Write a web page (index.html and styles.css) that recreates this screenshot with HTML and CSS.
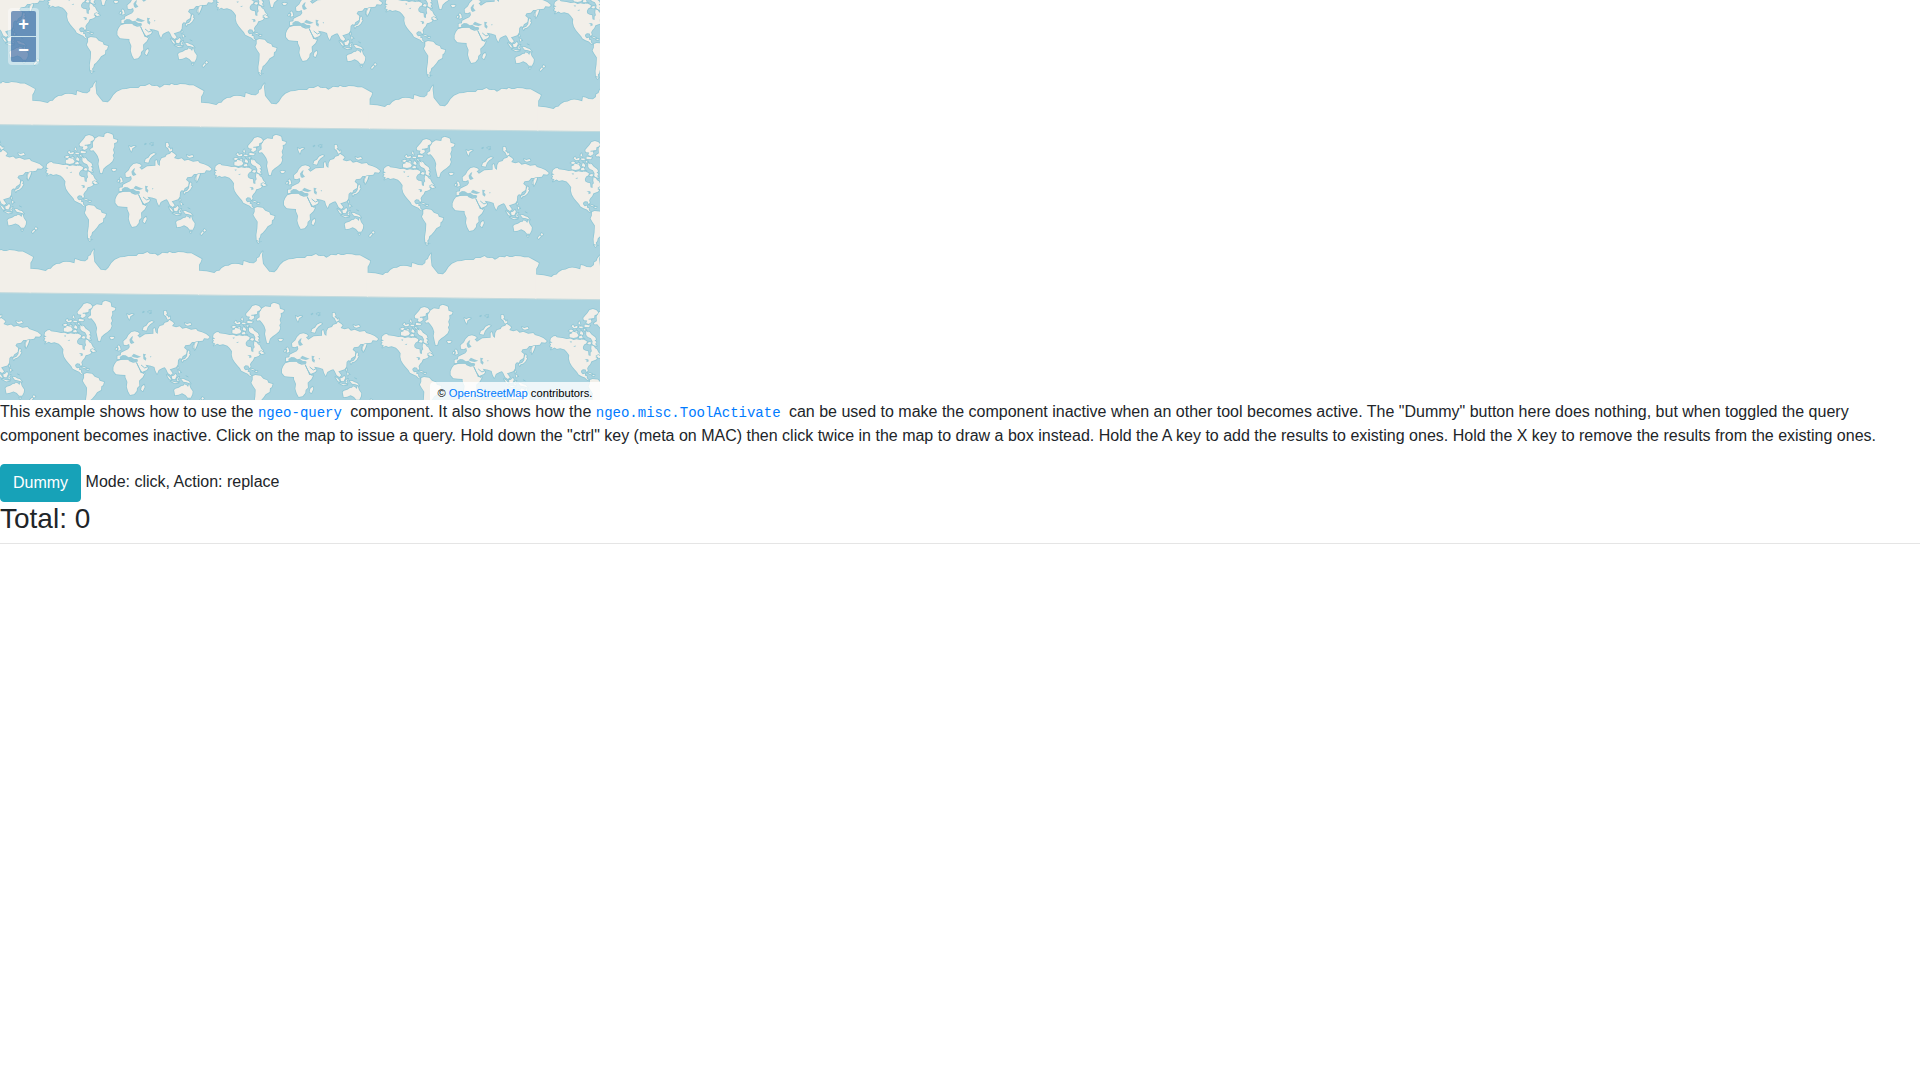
FILE: index.html
```html
<!DOCTYPE html>
<html lang="en">
<head>
<meta charset="utf-8">
<title>Query example</title>
<link rel="stylesheet" href="styles.css">
</head>
<body>
<div class="map">
<svg class="tiles" width="600" height="400" viewBox="0 0 600 400">
<defs>
<g id="world" transform="translate(180 120) scale(.3333)">
<path class="coast" d="M57 452L80 454 103 459 110 453 118 452 125 444 135 438 145 437 155 432 165 431 176 432 189 436 191 423 199 425 209 429 221 430 230 423 231 415 238 411 241 403 248 394 246 405 249 431 256 440 268 455 283 457 291 449 300 435 310 425 326 418 338 417 350 414 375 414 381 408 395 408 408 402 415 407 422 408 431 407 439 413 447 409 453 404 469 406 474 401 483 405 491 405 500 402 516 403 527 406 540 406 555 414 571 423 568 432 563 440 563 457"/>
<path class="ice" d="M55 452L80 454 103 459 110 453 118 452 125 444 135 438 145 437 155 432 165 431 176 432 189 436 191 423 199 425 209 429 221 430 230 423 231 415 238 411 241 403 248 394 246 405 249 431 256 440 268 455 283 457 291 449 300 435 310 425 326 418 338 417 350 414 375 414 381 408 395 408 408 402 415 407 422 408 431 407 439 413 447 409 453 404 469 406 474 401 483 405 491 405 500 402 516 403 527 406 540 406 555 414 571 423 568 432 563 440 563 457 575 459 575 531 55 525Z"/>
<path class="edge" d="M57 525L566 531"/>
<g class="land">
<path d="M105 148L107 139 115 133 121 132 125 136 142 138 155 141 166 140 175 144 184 142 195 144 203 141 208 144 215 148 214 154 207 158 203 165 204 172 210 176 219 178 220 190 226 192 226 182 230 178 228 170 229 160 236 163 240 169 245 172 250 182 256 188 250 193 240 195 246 198 243 203 236 206 229 208 225 217 220 222 216 229 218 237 214 240 211 233 203 232 197 237 199 243 203 247 210 245 209 251 215 253 215 259 222 266 215 263 209 257 199 253 190 248 186 241 178 232 170 222 164 212 161 200 162 190 155 180 148 173 135 169 125 171 118 167 107 173 112 167 104 163 108 158 104 153 112 152Z"/>
<path d="M224 264L232 261 248 263 256 272 268 277 271 284 284 288 281 298 276 301 275 312 263 319 257 328 248 338 242 343 240 352 236 356 238 364 230 361 229 345 232 325 233 305 225 293 220 284 224 275Z"/>
<path d="M236 94L245 88 244 74 250 62 262 55 278 57 280 48 288 44 298 47 304 50 306 62 318 66 316 73 308 76 309 85 305 95 308 105 304 112 307 120 303 130 294 138 284 145 276 152 272 166 267 165 264 152 261 138 263 126 259 114 253 105 246 97 238 98Z"/>
<path d="M343 176L342 166 352 157 357 147 366 138 376 136 386 139 391 144 384 148 391 155 399 150 407 145 420 144 432 143 432 128 436 126 439 139 445 144 446 129 451 120 462 117 466 110 476 107 480 101 489 107 494 112 488 120 500 124 511 121 519 128 530 125 545 131 560 129 565 135 578 139 590 144 601 153 596 158 584 157 580 164 566 166 564 176 558 188 552 187 552 179 557 168 548 168 541 176 528 178 524 185 532 192 531 204 520 211 517 218 511 217 506 222 505 236 500 244 487 248 481 250 490 262 484 267 476 262 470 249 466 244 459 246 448 252 443 264 438 254 435 243 424 239 408 236 416 246 412 252 398 258 390 250 385 237 380 229 384 220 370 218 362 212 368 225 358 218 350 209 340 211 334 218 324 220 324 209 334 208 335 200 345 195 356 190 361 183 359 174 351 178Z"/>
<path d="M322 226L334 222 356 221 360 226 371 230 380 229 387 244 394 261 406 262 400 274 389 284 390 299 383 306 382 315 374 325 362 327 356 316 352 302 354 288 348 274 348 267 334 266 320 265 312 255 312 244 316 234Z"/>
<path d="M494 312L498 308 508 305 516 300 522 299 525 295 532 298 536 303 539 293 543 306 550 316 549 325 544 335 535 335 528 327 518 322 508 326 497 328Z"/>
<path d="M404 296L406 303 400 316 395 311 397 302ZM579 333L584 337 580 341 576 338ZM574 340L577 343 570 351 567 348ZM535 341L541 341 538 345Z"/>
<path d="M328 178L332 182 334 192 326 194 328 187 325 181ZM321 185L324 188 321 192 318 190ZM301 154L307 152 315 154 312 158 305 160ZM400 132L403 123 411 119 417 110 427 105 433 107 422 115 415 123 411 134Z"/>
<path d="M353 84L359 88 366 84 373 85 363 91 360 101 356 94ZM464 75L470 74 473 83 469 87 475 90 478 95 482 91 482 98 475 101 470 91 464 86ZM526 111L533 114 543 111 546 116 535 119 529 117ZM399 80L405 76M414 78L421 75 427 74M420 83L427 80"/>
<path d="M537 193L541 198 538 202 542 205 536 215 529 221 522 223 519 228 517 222 527 218 533 210 534 201ZM506 241L508 247 504 248ZM507 253L513 257 509 263ZM487 271L493 269 499 263 502 269 497 280 489 279ZM472 267L480 272 486 281 480 280ZM483 285L495 288 508 290 496 292ZM504 276L510 272 505 280 509 286 503 284ZM515 278L523 279 530 283 537 285 544 293 532 289 522 287Z"/>
<path d="M204 78L211 70 217 63 223 54 233 51 243 54 249 61 246 67 238 70 237 78 227 81 229 90 220 96 213 93 216 86 206 85ZM163 127L171 124 171 119 184 122 190 130 186 136 175 138 163 136ZM160 117L167 113 174 115 168 121ZM179 118L187 118 186 122ZM169 103L174 98 177 105 187 101 186 108 176 109ZM189 94L193 88 196 99ZM191 104L202 104 203 109 193 108ZM208 98L225 101 221 106 208 105ZM196 118L205 119 203 129 194 126ZM213 117L223 120 229 128 240 136 243 143 238 146 244 150 240 156 245 162 236 160 231 156 232 148 227 139 218 135 213 129ZM191 134L200 131 203 139 192 139ZM221 150L229 152 225 158 216 156ZM205 111L213 112 209 117ZM244 192L250 189 260 196 251 199ZM216 242L224 243 232 247 226 247ZM230 250L239 249 236 253ZM231 364L239 365 235 369ZM555 178L559 169 566 167 562 179 556 192Z"/>
</g>
<path class="water" d="M331 213L340 207 348 208 358 214 365 212 374 219 386 221 384 228 369 226 352 220 332 220ZM366 211L373 203 383 208 395 212 384 216 373 214ZM401 203L410 205 406 211 411 217 409 224 402 219ZM163 149L170 148 168 153ZM174 163L182 161 180 165ZM208 201L219 202 221 208 214 211 214 205ZM360 161L366 153 371 150 368 161 375 170 366 174 362 170ZM422 210L426 211 424 215Z"/>
<path class="line" d="M382 231L388 244 397 259 404 263M395 237L406 246 415 242M196 111L207 126M183 112L190 119M210 112L218 121M220 82L235 81M200 142L210 140M514 257L517 261M243 366L244 364M529 269L537 273"/>
</g>
</defs>
<g>
<use href="#world" x="-335.3" y="-171.9"/><use href="#world" x="-166.6" y="-170"/><use href="#world" x="2" y="-168"/><use href="#world" x="170.6" y="-166"/><use href="#world" x="339.2" y="-164.1"/>
<use href="#world" x="-337.2" y="-3.9"/><use href="#world" x="-168.6" y="-2"/><use href="#world"/><use href="#world" x="168.6" y="2"/><use href="#world" x="337.2" y="3.9"/>
<use href="#world" x="-339.2" y="164.1"/><use href="#world" x="-170.6" y="166"/><use href="#world" x="-2" y="168"/><use href="#world" x="166.6" y="170"/><use href="#world" x="335.2" y="171.9"/>
</g>
</svg>
<div class="zoom"><button class="zoom-button zoom-in">+</button><button class="zoom-button zoom-out">−</button></div>
<div class="attribution">© <a class="link" href="#">OpenStreetMap</a> contributors.</div>
</div>
<p class="description">This example shows how to use the <code class="code">ngeo-query</code> component. It also shows how the <code class="code">ngeo.misc.ToolActivate</code> can be used to make the component inactive when an other tool becomes active. The "Dummy" button here does nothing, but when toggled the query component becomes inactive. Click on the map to issue a query. Hold down the "ctrl" key (meta on MAC) then click twice in the map to draw a box instead. Hold the A key to add the results to existing ones. Hold the X key to remove the results from the existing ones.</p>
<div class="toolbar"><button class="dummy">Dummy</button> <span>Mode: click, Action: replace</span></div>
<h3 class="total">Total: 0</h3>
<hr class="rule">
</body>
</html>
```
FILE: styles.css
```css
*, *::before, *::after { box-sizing: border-box; }
body {
  margin: 0;
  background: #fff;
  color: #212529;
  font: 16px/24px "Liberation Sans", Arial, sans-serif;
}
.map {
  position: relative;
  width: 600px;
  height: 400px;
  overflow: hidden;
  background: #aad3df;
}
.tiles { display: block; }
.ice, .land { fill: #f2efe9; }
.land, .coast {
  stroke: #85c1d1;
  stroke-opacity: .75;
  stroke-width: 4.5px;
  stroke-linejoin: round;
  paint-order: stroke;
}
.coast { fill: none; }
.edge { stroke: #c3dadd; stroke-width: 3px; }
.water { fill: #9acbd8; }
.line { fill: none; stroke: #8fc6d5; stroke-width: 3px; }
.zoom {
  position: absolute;
  top: 8px;
  left: 8px;
  padding: 3px;
  display: flex;
  flex-direction: column;
  gap: 1px;
  border-radius: 4px;
  background: rgba(255, 255, 255, .4);
}
.zoom-button {
  width: 25px;
  height: 25px;
  padding: 0;
  border: 0;
  background: rgba(0, 60, 136, .5);
  color: #fff;
  font: bold 18.24px/25px "Liberation Sans", Arial, sans-serif;
  text-align: center;
}
.zoom-in { border-radius: 2px 2px 0 0; }
.zoom-out { border-radius: 0 0 2px 2px; }
.attribution {
  position: absolute;
  right: 0;
  bottom: 0;
  height: 18px;
  padding: 0 7.6px 0 7px;
  border-radius: 4px 0 0;
  background: rgba(255, 255, 255, .8);
  color: #000;
  font-size: 11.2px;
  line-height: 22px;
  white-space: nowrap;
}
.link { color: #007bff; text-decoration: none; }
.description { margin: 0 0 16px; }
.code {
  margin-right: 3.9px;
  color: #007bff;
  font: 14px "Liberation Mono", "Courier New", monospace;
}
.toolbar { height: 38px; }
.dummy {
  height: 38px;
  padding: 6px 12px;
  border: 1px solid #17a2b8;
  border-radius: 4px;
  background: #17a2b8;
  color: #fff;
  font: inherit;
  vertical-align: middle;
}
.total {
  margin: 0 0 7.4px;
  font-size: 28px;
  font-weight: 500;
  line-height: 33.6px;
}
.rule {
  margin: 0;
  border: 0;
  border-top: 1px solid rgba(0, 0, 0, .1);
}
```
